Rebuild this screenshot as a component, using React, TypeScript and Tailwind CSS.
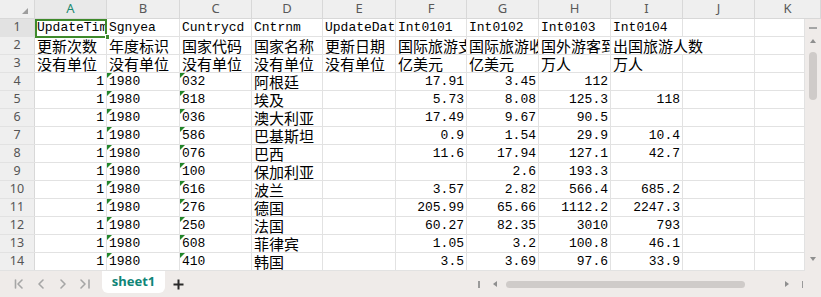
import React from 'react';

const COLS = ['A', 'B', 'C', 'D', 'E', 'F', 'G', 'H', 'I', 'J', 'K'];
const WIDTHS = [72, 73, 72, 71, 73, 71, 72, 72, 72, 72, 50];

type Cell = { v: string; right?: boolean; flag?: boolean; spill?: boolean };

const text = (v: string): Cell => ({ v });
const num = (v: string): Cell => ({ v, right: true });
const flagged = (v: string): Cell => ({ v, flag: true });

const dataRows: [string, string, string, string, string, string, string, string][] = [
  ['032', '阿根廷', '17.91', '3.45', '112', ''],
  ['818', '埃及', '5.73', '8.08', '125.3', '118'],
  ['036', '澳大利亚', '17.49', '9.67', '90.5', ''],
  ['586', '巴基斯坦', '0.9', '1.54', '29.9', '10.4'],
  ['076', '巴西', '11.6', '17.94', '127.1', '42.7'],
  ['100', '保加利亚', '', '2.6', '193.3', ''],
  ['616', '波兰', '3.57', '2.82', '566.4', '685.2'],
  ['276', '德国', '205.99', '65.66', '1112.2', '2247.3'],
  ['250', '法国', '60.27', '82.35', '3010', '793'],
  ['608', '菲律宾', '1.05', '3.2', '100.8', '46.1'],
  ['410', '韩国', '3.5', '3.69', '97.6', '33.9'],
] as any;

const rows: Cell[][] = [
  ['UpdateTime', 'Sgnyea', 'Cuntrycd', 'Cntrnm', 'UpdateDate', 'Int0101', 'Int0102', 'Int0103', 'Int0104', '', ''].map(text),
  [
    ...['更新次数', '年度标识', '国家代码', '国家名称', '更新日期', '国际旅游支出', '国际旅游收入', '国外游客到达'].map(text),
    { v: '出国旅游人数', spill: true },
    text(''),
    text(''),
  ],
  ['没有单位', '没有单位', '没有单位', '没有单位', '没有单位', '亿美元', '亿美元', '万人', '万人', '', ''].map(text),
  ...dataRows.map((r: any) => [
    num('1'),
    flagged('1980'),
    flagged(r[0]),
    text(r[1]),
    text(''),
    num(r[2]),
    num(r[3]),
    num(r[4]),
    num(r[5]),
    text(''),
    text(''),
  ]),
];

const isCjk = (s: string) => /[\u4e00-\u9fff]/.test(s);

const SheetCell: React.FC<{ cell: Cell; width: number }> = ({ cell, width }) => {
  const cjk = isCjk(cell.v);
  return (
    <div
      className={`relative h-full shrink-0 flex items-end px-[2px] whitespace-nowrap ${
        cell.spill ? 'overflow-visible z-10' : 'overflow-hidden border-r border-[#e2e2e2]'
      } ${cell.right ? 'justify-end' : 'justify-start'}`}
      style={{ width }}
    >
      {cell.flag && (
        <div className="absolute left-0 top-0 w-0 h-0 border-t-[5px] border-r-[5px] border-t-[#22862a] border-r-transparent" />
      )}
      <span
        className={
          cjk
            ? "text-[15px] leading-[17px] text-black [font-family:'Noto_Sans_CJK_SC',sans-serif]"
            : "text-[13px] leading-[16px] text-black [font-family:'Liberation_Mono',monospace]"
        }
      >
        {cell.v}
      </span>
    </div>
  );
};

const NavIcons: React.FC = () => (
  <svg width="80" height="12" viewBox="0 0 80 12" className="ml-[13px]" fill="none" stroke="#a6a6a6" strokeWidth="1.6" strokeLinecap="round" strokeLinejoin="round">
    <path d="M2.5 2v8" />
    <path d="M9 2 5 6l4 4" />
    <path d="M30 2 26 6l4 4" />
    <path d="M48 2l4 4-4 4" />
    <path d="M68 2l4 4-4 4" />
    <path d="M76 2v8" />
  </svg>
);

export default function App() {
  return (
    <div className="w-[821px] h-[297px] overflow-hidden bg-white flex flex-col [font-family:'Noto_Sans',sans-serif]">
      {/* column headers */}
      <div className="flex h-[19px] shrink-0 bg-[#efefef] border-b border-[#d8d8d8]">
        <div className="relative w-[35px] shrink-0 border-r border-[#d8d8d8]">
          <div className="absolute right-[6px] bottom-[4px] w-0 h-0 border-b-[6px] border-l-[6px] border-b-[#9d9d9d] border-l-transparent" />
        </div>
        {COLS.map((c, i) => (
          <div
            key={c}
            className={`shrink-0 flex items-center justify-center text-[13px] border-r border-[#d8d8d8] ${
              c === 'A' ? 'text-[#1d8a73] bg-[#e9e9e9]' : 'text-[#595959]'
            }`}
            style={{ width: i === 10 ? 66 : WIDTHS[i] }}
          >
            {c}
          </div>
        ))}
      </div>

      {/* body */}
      <div className="flex h-[252px] shrink-0">
        <div className="relative w-[805px] shrink-0">
          {rows.map((r, ri) => (
            <div key={ri} className="flex h-[18px] border-b border-[#e2e2e2]">
              <div
                className={`w-[35px] shrink-0 flex items-center justify-center text-[12.5px] text-[#555] border-r border-[#d8d8d8] ${
                  ri === 0 ? 'bg-[#e2e2e2]' : 'bg-[#efefef]'
                }`}
              >
                {ri + 1}
              </div>
              {r.map((cell, ci) => (
                <SheetCell key={ci} cell={cell} width={WIDTHS[ci]} />
              ))}
            </div>
          ))}
          {/* selection */}
          <div className="absolute left-[35px] top-0 w-[72px] h-[19px] border-2 border-[#3f8a2b] pointer-events-none z-20" />
          <div className="absolute left-[105px] top-[15px] w-[5px] h-[6px] bg-[#3f8a2b] border border-white z-20" />
        </div>

        {/* vertical scrollbar */}
        <div className="w-[16px] shrink-0 bg-[#efebe9] flex flex-col items-center">
          <div className="mt-[8px] w-[8px] h-[1.5px] bg-[#a5a5a5]" />
          <div className="mt-[10px] w-0 h-0 border-l-[3px] border-r-[3px] border-b-[4px] border-l-transparent border-r-transparent border-b-[#8f8f8f]" />
          <div className="mt-[9px] w-[8px] h-[48px] rounded-full bg-[#cfcbc9]" />
          <div className="flex-1" />
          <div className="mb-[10px] w-0 h-0 border-l-[3px] border-r-[3px] border-t-[4px] border-l-transparent border-r-transparent border-t-[#8f8f8f]" />
        </div>
      </div>

      {/* sheet bar */}
      <div className="flex-1 bg-[#efebe9] flex items-start">
        <div className="h-full flex items-center">
          <NavIcons />
        </div>
        <div className="ml-[9px] w-[63px] h-[22px] bg-white rounded-b-[6px] flex items-center justify-center text-[13px] font-bold text-[#0f8577]">
          sheet1
        </div>
        <div className="h-full flex items-center ml-[8px]">
          <svg width="11" height="11" viewBox="0 0 11 11" stroke="#2a2a2a" strokeWidth="2">
            <path d="M5.5 0.5v10M0.5 5.5h10" />
          </svg>
        </div>
        <div className="h-full flex items-center ml-[294px]">
          <div className="w-[1.5px] h-[7px] bg-[#9a9a9a]" />
          <div className="ml-[13px] w-0 h-0 border-t-[3px] border-b-[3px] border-r-[4px] border-t-transparent border-b-transparent border-r-[#8f8f8f]" />
          <div className="ml-[9px] w-[239px] h-[7px] rounded-full bg-[#cfcbc9]" />
          <div className="ml-[40px] w-0 h-0 border-t-[3px] border-b-[3px] border-l-[4px] border-t-transparent border-b-transparent border-l-[#8f8f8f]" />
          <div className="ml-[13px] w-[1.5px] h-[7px] bg-[#9a9a9a]" />
        </div>
      </div>
    </div>
  );
}
